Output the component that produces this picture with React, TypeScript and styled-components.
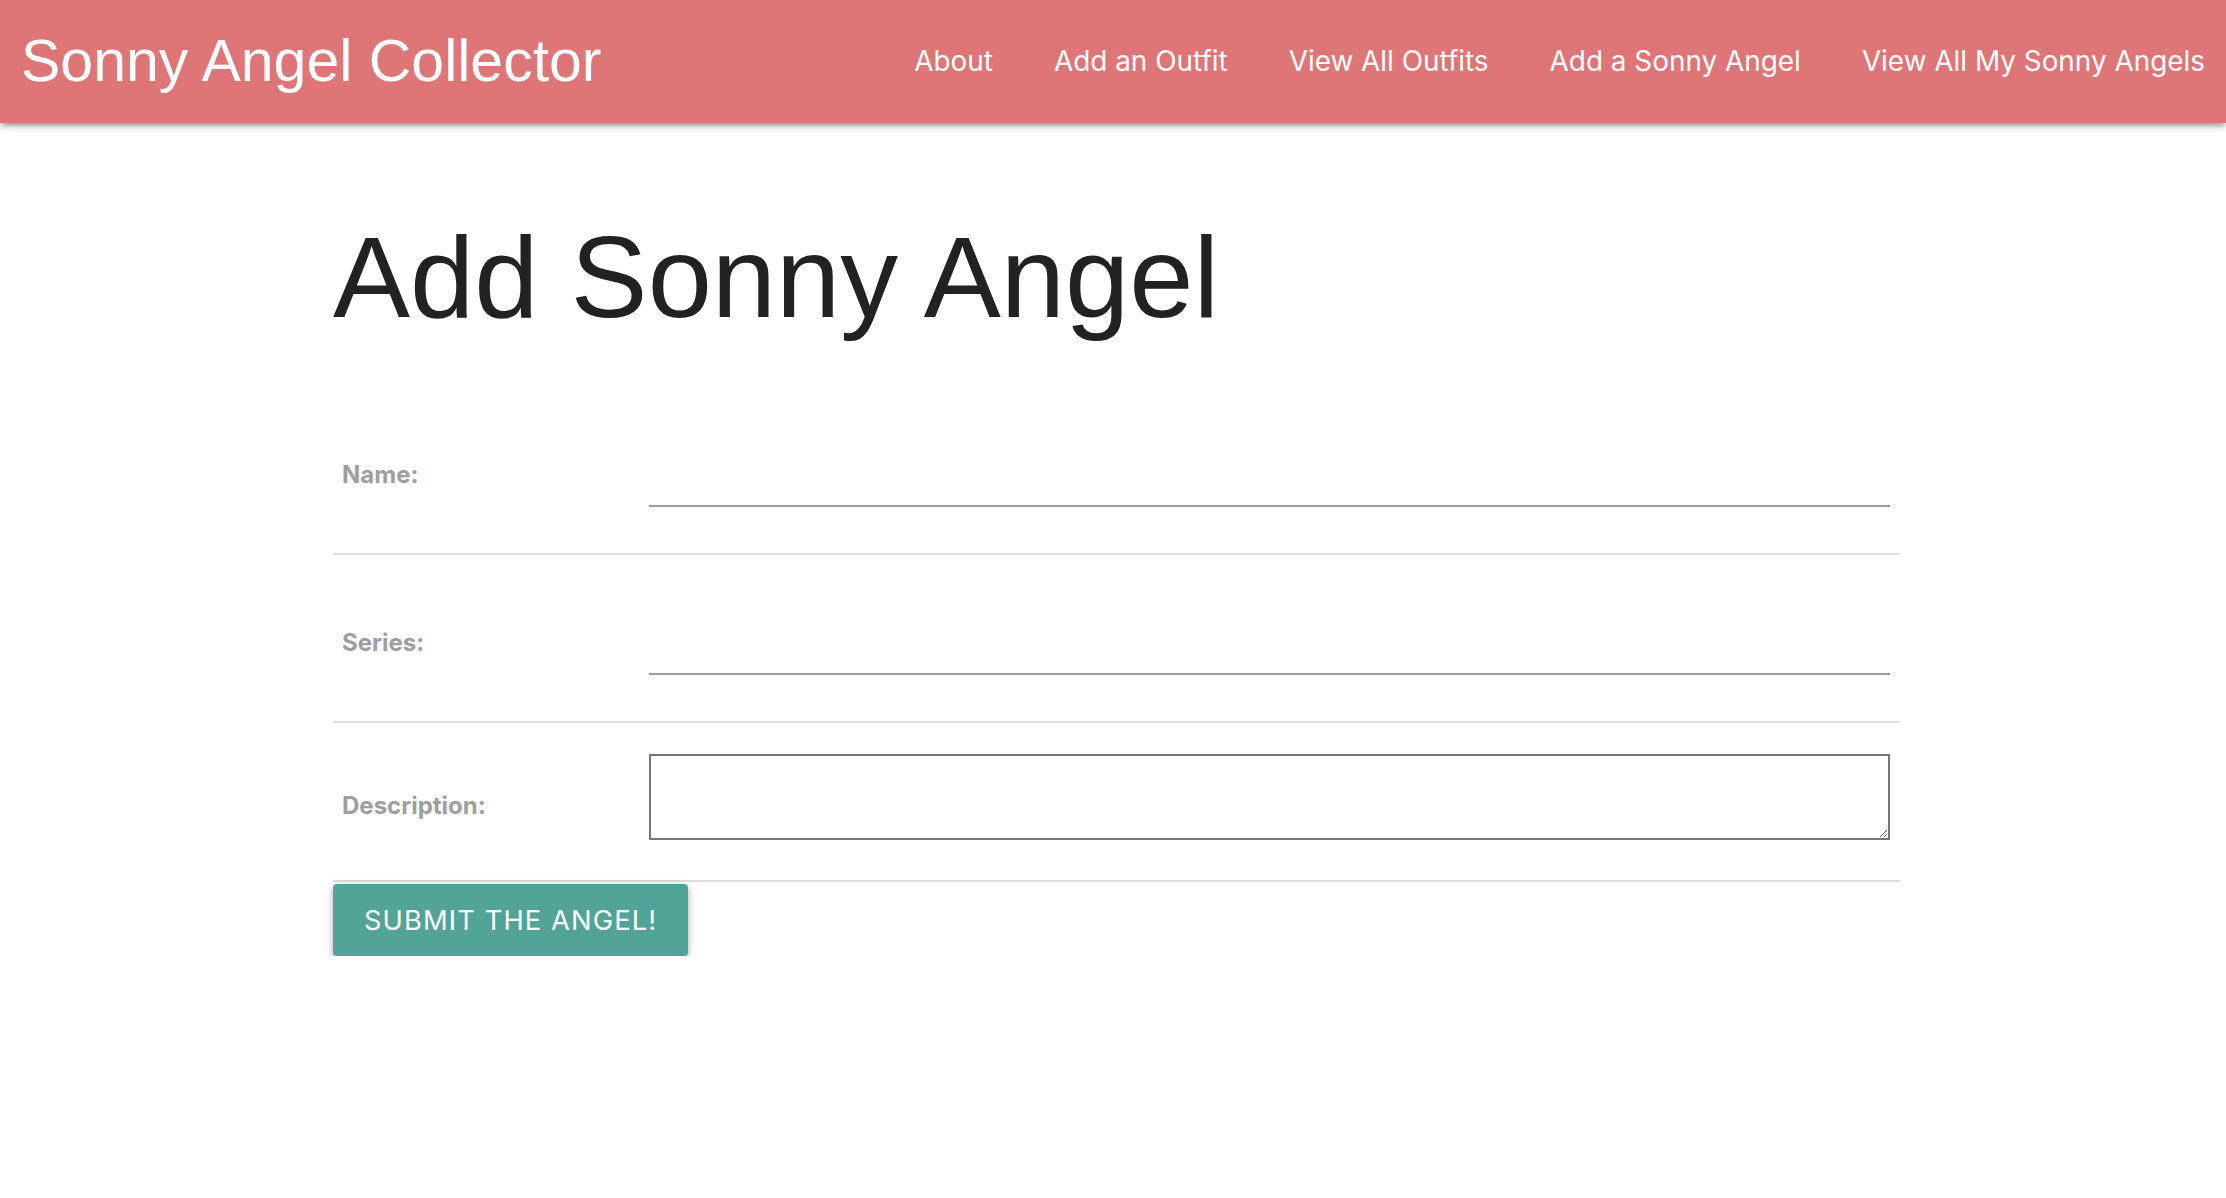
import React from "react";

import styled, { createGlobalStyle } from "styled-components";

const GlobalStyle = createGlobalStyle`
  html, body {
    margin: 0;
    padding: 0;
    background: #ffffff;
  }
  body {
    font-family: Inter, "Noto Sans", sans-serif;
    color: rgba(0, 0, 0, 0.87);
  }
  * {
    box-sizing: border-box;
  }
`;

const Nav = styled.nav`
  position: relative;
  z-index: 2;
  display: flex;
  align-items: center;
  justify-content: space-between;
  height: 123px;
  padding: 0 21px 0 21px;
  background-color: #de7577;
  box-shadow: 0 4px 4px 0 rgba(0, 0, 0, 0.14), 0 6px 2px -4px rgba(0, 0, 0, 0.12),
    0 2px 10px 0 rgba(0, 0, 0, 0.2);
`;

const Brand = styled.a`
  font-family: "Liberation Sans", Arial, sans-serif;
  font-size: 59px;
  line-height: 123px;
  color: #ffffff;
  text-decoration: none;
  white-space: nowrap;
`;

const NavList = styled.ul`
  display: flex;
  align-items: center;
  gap: 61px;
  margin: 0;
  padding: 0;
  list-style: none;
`;

const NavLink = styled.a`
  font-family: Inter, "Noto Sans", sans-serif;
  font-size: 27.9px;
  line-height: 121px;
  color: #ffffff;
  text-decoration: none;
  white-space: nowrap;
`;

const Main = styled.main`
  width: 1567px;
  margin-left: 333px;
`;

const Title = styled.h1`
  margin: 91px 0 48px 0;
  font-family: "Liberation Sans", Arial, sans-serif;
  font-size: 115.5px;
  font-weight: 400;
  line-height: 126px;
  color: #222222;
`;

const FormTable = styled.table`
  width: 100%;
  border-collapse: collapse;
`;

const Row = styled.tr`
  border-bottom: 2px solid #e0e0e0;
`;

const Label = styled.th`
  width: 306px;
  padding: 8px 9px 0 9px;
  text-align: left;
  vertical-align: middle;
  font-family: Inter, "Noto Sans", sans-serif;
  font-size: 24px;
  font-weight: 700;
  color: #9e9e9e;
`;

const Cell = styled.td<{ $top: number; $bottom: number }>`
  padding: ${(p) => p.$top}px 10px ${(p) => p.$bottom}px 10px;
`;

const LineInput = styled.input`
  display: block;
  width: 100%;
  height: 90px;
  margin: 0 0 17px 0;
  padding: 0;
  border: none;
  border-bottom: 2px solid #9e9e9e;
  outline: none;
  background: transparent;
  font-family: Inter, "Noto Sans", sans-serif;
  font-size: 30px;
`;

const BoxArea = styled.textarea`
  display: block;
  width: 100%;
  height: 86px;
  margin: 0;
  padding: 4px;
  border: 2px solid #767676;
  border-radius: 0;
  font-family: Inter, "Noto Sans", sans-serif;
  font-size: 26px;
`;

const SubmitButton = styled.button`
  display: inline-flex;
  align-items: center;
  height: 72px;
  margin-top: 2px;
  padding: 0 31px;
  border: none;
  border-radius: 4px;
  background-color: #52a398;
  color: #ffffff;
  font-family: Inter, "Noto Sans", sans-serif;
  font-size: 27.3px;
  font-weight: 400;
  letter-spacing: 1.1px;
  text-transform: uppercase;
  box-shadow: 0 4px 5px 0 rgba(0, 0, 0, 0.16), 0 6px 2px -4px rgba(0, 0, 0, 0.12),
    0 2px 10px 0 rgba(0, 0, 0, 0.22);
  cursor: pointer;
`;

const links = [
  "About",
  "Add an Outfit",
  "View All Outfits",
  "Add a Sonny Angel",
  "View All My Sonny Angels",
];

const App: React.FC = () => {
  return (
    <>
      <GlobalStyle />
      <Nav>
        <Brand href="#">Sonny Angel Collector</Brand>
        <NavList>
          {links.map((l) => (
            <li key={l}>
              <NavLink href="#">{l}</NavLink>
            </li>
          ))}
        </NavList>
      </Nav>
      <Main>
        <Title>Add Sonny Angel</Title>
        <form onSubmit={(e) => e.preventDefault()}>
          <FormTable>
            <tbody>
              <Row>
                <Label>Name:</Label>
                <Cell $top={29} $bottom={29}>
                  <LineInput type="text" />
                </Cell>
              </Row>
              <Row>
                <Label>Series:</Label>
                <Cell $top={30} $bottom={29}>
                  <LineInput type="text" />
                </Cell>
              </Row>
              <Row>
                <Label>Description:</Label>
                <Cell $top={31} $bottom={40}>
                  <BoxArea />
                </Cell>
              </Row>
            </tbody>
          </FormTable>
          <SubmitButton type="submit">Submit the Angel!</SubmitButton>
        </form>
      </Main>
    </>
  );
};

export default App;
